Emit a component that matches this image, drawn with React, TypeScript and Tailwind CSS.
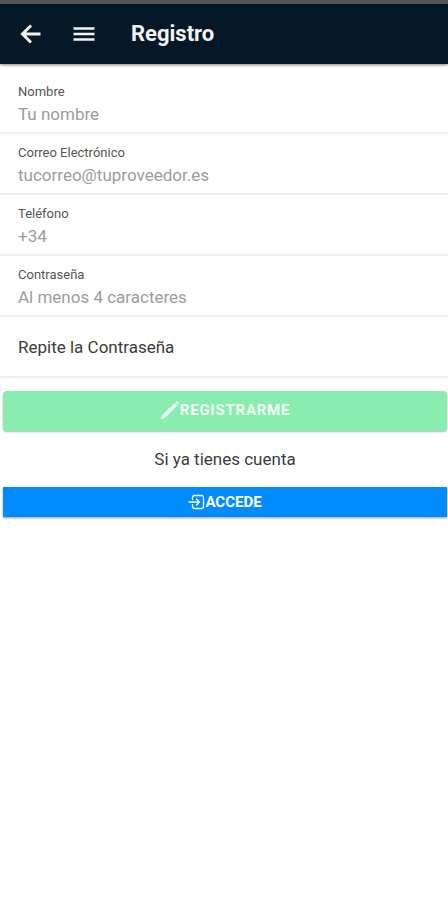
import React from "react";

type FieldProps = {
  id: string;
  label: string;
  type: string;
  placeholder: string;
};

function Field({ id, label, type, placeholder }: FieldProps) {
  return (
    <div className="flex h-[61px] flex-col border-b-2 border-[#efefef] px-[18px] pt-3">
      <label htmlFor={id} className="text-[13px] leading-[14px] text-[#555555]">
        {label}
      </label>
      <input
        id={id}
        type={type}
        placeholder={placeholder}
        className="h-[30px] w-full bg-transparent text-[17px] text-[#444444] outline-none placeholder:text-[#9c9c9c]"
      />
    </div>
  );
}

function BackIcon() {
  return (
    <svg viewBox="0 0 22 20" className="h-5 w-[22px]" fill="none" stroke="currentColor" strokeWidth="3" aria-hidden="true">
      <path d="M11 1.500 2.500 10l8.500 8.500M2.500 10H20.500" />
    </svg>
  );
}

function MenuIcon() {
  return (
    <svg viewBox="0 0 22 16" className="h-4 w-[22px]" fill="none" stroke="currentColor" strokeWidth="2.6" aria-hidden="true">
      <path d="M.5 2.500h21M.5 8h21M.5 13.500h21" />
    </svg>
  );
}

function PencilIcon() {
  return (
    <svg viewBox="0 0 20 20" className="size-5" fill="currentColor" aria-hidden="true">
      <path d="M.8 19.200l1.300-4L14.700 3l2.400 2.400L4.600 17.900zM15.400 2.300l.9-.8q.8-.7 1.600 0l.6.6q.7.800 0 1.600l-.8.900z" />
    </svg>
  );
}

function EnterIcon() {
  return (
    <svg viewBox="0 0 17 16" className="h-4 w-[17px]" fill="none" stroke="currentColor" strokeWidth="1.300" strokeLinecap="round" strokeLinejoin="round" aria-hidden="true">
      <path d="M4.500 5.500V3.500q0-2 2-2h7q2 0 2 2v9q0 2-2 2h-7q-2 0-2-2v-2M1 8h10.500M8.500 5l3 3-3 3" />
    </svg>
  );
}

export default function App() {
  return (
    <div className="min-h-screen bg-white font-[Roboto,sans-serif]">
      <header className="flex h-16 items-center border-t-4 border-[#55585b] bg-[#051827] pl-5 text-[#f3f3f3] shadow-[0_1px_3px_rgba(0,0,0,0.5)]">
        <button type="button" aria-label="Volver">
          <BackIcon />
        </button>
        <button type="button" aria-label="Menú" className="ml-[31px]">
          <MenuIcon />
        </button>
        <h1 className="ml-9 text-[22px] leading-7 font-bold">Registro</h1>
      </header>

      <form onSubmit={(event) => event.preventDefault()}>
        <div className="pt-[9px]">
          <Field id="nombre" label="Nombre" type="text" placeholder="Tu nombre" />
          <Field id="correo" label="Correo Electrónico" type="email" placeholder="tucorreo@tuproveedor.es" />
          <Field id="telefono" label="Teléfono" type="tel" placeholder="+34" />
          <Field id="clave" label="Contraseña" type="password" placeholder="Al menos 4 caracteres" />
          <div className="relative h-[61px] border-b-2 border-[#efefef]">
            <input id="repite" type="password" className="peer size-full bg-transparent px-[18px] pt-4 outline-none" />
            <label
              htmlFor="repite"
              className="absolute inset-0 flex items-center px-[18px] pt-0.5 text-[17px] text-[#3c3c3c] peer-focus:items-start peer-focus:text-[13px]"
            >
              Repite la Contraseña
            </label>
          </div>
        </div>

        <div className="flex flex-col pt-[13px] pr-px pl-[3px]">
          <button
            type="submit"
            className="flex h-10 items-center justify-center rounded bg-[#88edaf] pb-0.5 text-[15px] font-bold tracking-wider text-[#f4fff5] shadow-[0_1px_2px_rgba(0,0,0,0.3)]"
          >
            <PencilIcon />
            REGISTRARME
          </button>
          <p className="py-4 text-center text-[17px] leading-6 text-[#3c3c3c]">Si ya tienes cuenta</p>
          <button
            type="button"
            className="flex h-[30px] items-center justify-center bg-[#008bff] text-[15px] font-bold text-white shadow-[0_1px_2px_rgba(0,0,0,0.4)]"
          >
            <EnterIcon />
            ACCEDE
          </button>
        </div>
      </form>
    </div>
  );
}
